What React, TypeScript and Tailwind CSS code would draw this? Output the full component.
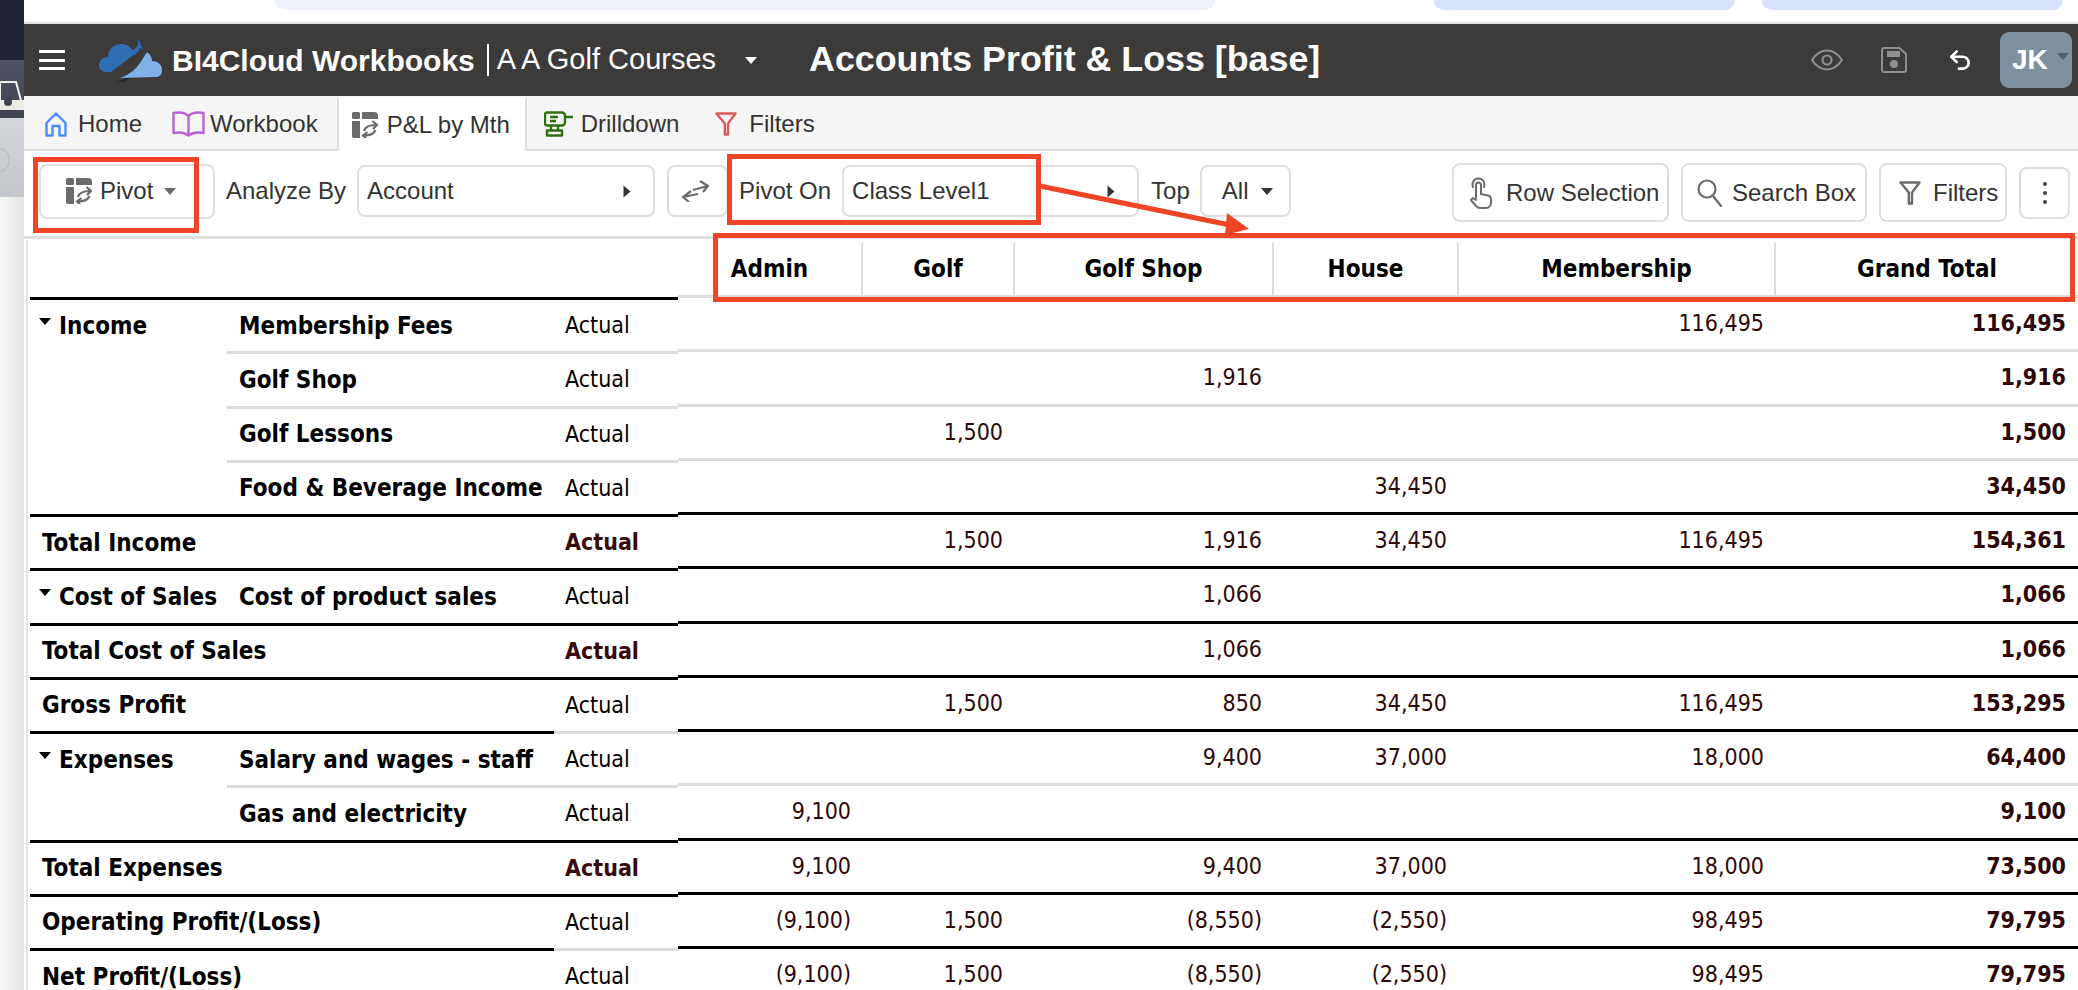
import React from "react";
import { Undo2 } from "lucide-react";

const sans = "font-['Liberation_Sans',Arial,sans-serif]";
const cond = "font-['DejaVu_Sans_Condensed','DejaVu_Sans',sans-serif] [font-stretch:condensed]";

type Row = {
  a: string;
  b?: string;
  caret?: boolean;
  bold?: boolean;
  lines: [string, string, string];
  nums: string[];
  line: string;
};

const K = "border-black";
const G = "border-[#dcdcdc]";
const N = "border-transparent";

const rows: Row[] = [
  { a: "Income", caret: true, b: "Membership Fees", lines: [N, G, G], line: G, nums: ["", "", "", "", "116,495", "116,495"] },
  { a: "", b: "Golf Shop", lines: [N, G, G], line: G, nums: ["", "", "1,916", "", "", "1,916"] },
  { a: "", b: "Golf Lessons", lines: [N, G, G], line: G, nums: ["", "1,500", "", "", "", "1,500"] },
  { a: "", b: "Food & Beverage Income", lines: [K, K, K], line: K, nums: ["", "", "", "34,450", "", "34,450"] },
  { a: "Total Income", bold: true, lines: [K, K, K], line: K, nums: ["", "1,500", "1,916", "34,450", "116,495", "154,361"] },
  { a: "Cost of Sales", caret: true, b: "Cost of product sales", lines: [K, K, K], line: K, nums: ["", "", "1,066", "", "", "1,066"] },
  { a: "Total Cost of Sales", bold: true, lines: [K, K, K], line: K, nums: ["", "", "1,066", "", "", "1,066"] },
  { a: "Gross Profit", lines: [K, K, G], line: K, nums: ["", "1,500", "850", "34,450", "116,495", "153,295"] },
  { a: "Expenses", caret: true, b: "Salary and wages - staff", lines: [N, G, G], line: G, nums: ["", "", "9,400", "37,000", "18,000", "64,400"] },
  { a: "", b: "Gas and electricity", lines: [K, K, K], line: K, nums: ["9,100", "", "", "", "", "9,100"] },
  { a: "Total Expenses", bold: true, lines: [K, K, K], line: K, nums: ["9,100", "", "9,400", "37,000", "18,000", "73,500"] },
  { a: "Operating Profit/(Loss)", lines: [K, K, G], line: K, nums: ["(9,100)", "1,500", "(8,550)", "(2,550)", "98,495", "79,795"] },
  { a: "Net Profit/(Loss)", lines: [K, K, K], line: K, nums: ["(9,100)", "1,500", "(8,550)", "(2,550)", "98,495", "79,795"] },
];

const columns = [
  { name: "Admin", w: "w-[185px]" },
  { name: "Golf", w: "w-[152px]" },
  { name: "Golf Shop", w: "w-[259px]" },
  { name: "House", w: "w-[185px]" },
  { name: "Membership", w: "w-[317px]" },
  { name: "Grand Total", w: "w-[302px]" },
];

const PivotIcon = ({ className }: { className?: string }) => (
  <svg viewBox="0 0 26 26" className={className} fill="#6b6b6b">
    <rect x="0" y="0" width="8" height="7" rx="1.500" />
    <path d="M10 0h12a4 4 0 0 1 4 4v3H10z" />
    <path d="M0 9h8v17H2a2 2 0 0 1-2-2z" />
    <g fill="none" stroke="#6b6b6b" strokeWidth="2.200">
      <path d="M12 19C13 15 17 13 24 13M20.500 9L25 13l-4 4" />
      <path d="M23.500 18C22 22 18 23.500 12 23.500M15.500 20L11 23.500l3 2.500" />
    </g>
  </svg>
);

const FunnelIcon = ({ className, color }: { className?: string; color: string }) => (
  <svg viewBox="0 0 22 24" className={className} fill="none" stroke={color} strokeWidth="2.400">
    <path d="M1.500 1.500h19L13 11.500V22.500h-3.200V11.500z" strokeLinejoin="round" />
  </svg>
);

const Caret = ({ className }: { className?: string }) => (
  <span className={`inline-block h-0 w-0 border-x-[6px] border-t-[7px] border-x-transparent ${className ?? ""}`} />
);

const CloudLogo = () => (
  <svg viewBox="0 0 66 44" className="h-[44px] w-[66px]">
    <path d="M1 27c0-5 4-8 9-8 0-8 6-13 13-13 5 0 9 2 11 6 3-1 6-1 8 0L13 34H8c-4 0-7-3-7-7z" fill="#2f6db4" />
    <path d="M18 44c8-2 17-8 25-20l7-11 1 1-6 13c-5 8-12 14-20 17z" fill="#23262b" />
    <path d="M40 0l5 12-3-2-5 7c-2-1-2-1-3-2l6-8z" fill="#2f6db4" />
    <path d="M22 40c10-3 17-10 22-18l5-8c3 2 5 5 5 9 5 0 10 3 10 9 0 5-3 7-6 7z" fill="#7fb2e6" />
  </svg>
);

function Leftstrip() {
  return (
    <div className="flex w-[24px] shrink-0 flex-col">
      <div className="h-[60px] bg-[#1d2433]" />
      <div className="relative h-[58px] overflow-hidden bg-gradient-to-b from-[#4c5364] to-[#3f4450]">
        <svg viewBox="0 0 24 58" className="h-[58px] w-[24px]">
          <path d="M0 22h16l7 26H0z" fill="none" stroke="#f1f1ec" strokeWidth="2" />
          <path d="M0 40h24v10H0z" fill="#ecebe6" />
          <circle cx="8" cy="42" r="4" fill="#3f4450" />
        </svg>
      </div>
      <div className="relative h-[79px] overflow-hidden bg-gradient-to-b from-[#d3d6da] to-[#c3c6ca]">
        <span className="absolute left-[-16px] top-[29px] h-[26px] w-[26px] rounded-full border border-[#b3b5b8]" />
      </div>
      <div className="flex-1 bg-gradient-to-r from-[#f7f7f7] to-[#e6e6e6]" />
    </div>
  );
}

function Header() {
  return (
    <div className={`flex h-[72px] items-center bg-[#3d3b39] pl-[15px] pr-[6px] text-white ${sans}`}>
      <div className="flex w-[26px] flex-col gap-[5.5px]">
        <span className="h-[3px] bg-white" />
        <span className="h-[3px] bg-white" />
        <span className="h-[3px] bg-white" />
      </div>
      <div className="ml-[33px]">
        <CloudLogo />
      </div>
      <span className="ml-[8px] text-[30px] font-bold">BI4Cloud Workbooks</span>
      <span className="ml-[12px] h-[32px] w-[2px] bg-white" />
      <span className="ml-[8px] text-[29px]">A A Golf Courses</span>
      <Caret className="ml-[29px] border-t-white" />
      <span className="ml-[52px] text-[35.8px] font-bold">Accounts Profit &amp; Loss [base]</span>
      <svg viewBox="0 0 32 22" className="ml-auto h-[22px] w-[32px]" fill="none" stroke="#8f8f8f" strokeWidth="2.200">
        <path d="M1 11c4-6 9-9.500 15-9.500S27 5 31 11c-4 6-9 9.500-15 9.500S5 17 1 11z" />
        <circle cx="16" cy="11" r="4.500" />
      </svg>
      <svg viewBox="0 0 26 26" className="ml-[38px] h-[26px] w-[26px]" fill="none">
        <path d="M2.500 1h16L25 7v16a2 2 0 0 1-2 2H3a2 2 0 0 1-2-2V3a2 2 0 0 1 1.500-2z" stroke="#8f8f8f" strokeWidth="2" />
        <rect x="6" y="4" width="13" height="6" fill="#8f8f8f" />
        <circle cx="13" cy="17" r="4" fill="#8f8f8f" />
      </svg>
      <Undo2 size={26} strokeWidth={2.400} className="ml-[40px] text-white" />
      <div className="ml-[27px] flex h-[56px] w-[72px] items-center rounded-[9px] bg-[#7f919f] pl-[12px]">
        <span className="text-[28px] font-bold">JK</span>
        <Caret className="ml-[9px] mt-[-8px] border-t-[#3d3b39]/60" />
      </div>
    </div>
  );
}

function Tabs() {
  const label = "text-[24px] text-[#333]";
  return (
    <div className={`flex h-[55px] items-stretch border-b-2 border-[#dedede] bg-[#f5f5f5] pl-[21px] ${sans}`}>
      <div className="flex items-center pt-[3px]">
        <svg viewBox="0 0 22 25" className="h-[25px] w-[22px]" fill="none" stroke="#4b8df8" strokeWidth="2.400" strokeLinejoin="round">
          <path d="M1.500 11L11 1.500 20.500 11v12.500h-6V14h-7v9.500h-6z" />
        </svg>
        <span className={`ml-[11px] ${label}`}>Home</span>
      </div>
      <div className="ml-[30px] flex items-center pt-[3px]">
        <svg viewBox="0 0 33 26" className="h-[26px] w-[33px]" fill="none" stroke="#b565d0" strokeWidth="2.400" strokeLinejoin="round">
          <path d="M16.500 5C13 1.500 7 1 1.500 2v20c5.500-1 11-.5 15 2.500 4-3 9.500-3.500 15-2.500V2c-5.500-1-11.500-.5-15 3zM16.500 5v19" />
        </svg>
        <span className={`ml-[5px] ${label}`}>Workbook</span>
      </div>
      <div className="relative z-10 mb-[-2px] ml-[19px] mt-[2px] flex w-[190px] items-center border-x-2 border-[#dedede] bg-white pl-[13px] pt-[1px]">
        <PivotIcon className="h-[26px] w-[26px]" />
        <span className={`ml-[9px] ${label}`}>P&amp;L by Mth</span>
      </div>
      <div className="ml-[17px] flex items-center pt-[3px]">
        <svg viewBox="0 0 30 26" className="h-[26px] w-[30px]" fill="none" stroke="#2f6f10" strokeWidth="2.400" strokeLinejoin="round">
          <path d="M3 1.500h15a3 3 0 0 1 3 3v7a3 3 0 0 1-3 3H3a2 2 0 0 1-2-2v-9a2 2 0 0 1 2-2z" />
          <path d="M21 6h8M6 6h8M6 10h6M7 14.500v5M14 14.500v5M3 24.500h15v-5H3z" />
        </svg>
        <span className={`ml-[7px] ${label}`}>Drilldown</span>
      </div>
      <div className="ml-[36px] flex items-center pt-[3px]">
        <FunnelIcon className="h-[24px] w-[22px]" color="#da5a55" />
        <span className={`ml-[12px] ${label}`}>Filters</span>
      </div>
    </div>
  );
}

const boxed = "flex items-center rounded-[8px] border-2 border-[#dedede] bg-white";

function Toolbar() {
  const txt = "text-[24px] text-[#333]";
  return (
    <div className={`flex h-[88px] items-center border-b-[3px] border-[#dedede] pb-[5px] pl-[15px] pr-[8px] ${sans}`}>
      <div className={`${boxed} h-[55px] w-[176px] pl-[25px]`}>
        <PivotIcon className="h-[26px] w-[26px]" />
        <span className={`ml-[8px] ${txt}`}>Pivot</span>
        <Caret className="ml-[11px] border-t-[#6b6b6b]" />
      </div>
      <span className={`ml-[11px] ${txt}`}>Analyze By</span>
      <div className={`${boxed} ml-[11px] h-[52px] w-[298px] justify-between pl-[8px] pr-[20px]`}>
        <span className={txt}>Account</span>
        <Caret className="rotate-[-90deg] border-t-[#333]" />
      </div>
      <div className={`${boxed} ml-[12px] h-[52px] w-[61px] justify-start pl-[13px]`}>
        <svg viewBox="0 0 27 22" className="h-[22px] w-[27px]" fill="none" stroke="#6b6b6b" strokeWidth="2.200">
          <path d="M11 10L26 6M18 1l8 5-5 6" />
          <path d="M16 14L1 17M9 11l-8 6 6 5" />
        </svg>
      </div>
      <span className={`ml-[11px] ${txt}`}>Pivot On</span>
      <div className={`${boxed} ml-[11px] h-[52px] w-[297px] justify-between pl-[8px] pr-[20px]`}>
        <span className={txt}>Class Level1</span>
        <Caret className="rotate-[-90deg] border-t-[#333]" />
      </div>
      <span className={`ml-[12px] ${txt}`}>Top</span>
      <div className={`${boxed} ml-[10px] h-[52px] w-[91px] pl-[20px]`}>
        <span className={txt}>All</span>
        <Caret className="ml-[13px] border-t-[#333]" />
      </div>
      <div className="ml-auto flex items-center gap-[12px] pt-[3px]">
        <div className={`${boxed} h-[59px] w-[217px] pl-[15px]`}>
          <svg viewBox="0 0 24 32" className="h-[32px] w-[24px]" fill="none" stroke="#6b6b6b" strokeWidth="2" strokeLinecap="round" strokeLinejoin="round">
            <path d="M4 10a6 6 0 1 1 11 0" />
            <path d="M7 21V8a2.500 2.500 0 0 1 5 0v9l7 1.500c2 .5 3 2 3 4v3c0 3-2 5.500-5 5.500h-6c-2 0-3-1-4-2l-5-6 2-2 3 2" />
          </svg>
          <span className={`ml-[13px] ${txt}`}>Row Selection</span>
        </div>
        <div className={`${boxed} h-[59px] w-[186px] pl-[14px]`}>
          <svg viewBox="0 0 26 30" className="h-[30px] w-[26px]" fill="none" stroke="#6b6b6b" strokeWidth="2.200" strokeLinecap="round">
            <circle cx="10" cy="11" r="8.500" />
            <path d="M16 18l8 10" />
          </svg>
          <span className={`ml-[9px] ${txt}`}>Search Box</span>
        </div>
        <div className={`${boxed} h-[59px] w-[128px] pl-[18px]`}>
          <FunnelIcon className="h-[24px] w-[22px]" color="#6b6b6b" />
          <span className={`ml-[12px] ${txt}`}>Filters</span>
        </div>
        <div className={`${boxed} h-[52px] w-[51px] justify-center`}>
          <span className="flex flex-col gap-[5px]">
            <span className="h-[4px] w-[4px] rounded-full bg-[#444]" />
            <span className="h-[4px] w-[4px] rounded-full bg-[#444]" />
            <span className="h-[4px] w-[4px] rounded-full bg-[#444]" />
          </span>
        </div>
      </div>
    </div>
  );
}

function LeftTable() {
  return (
    <div className="w-[648px] shrink-0 text-black">
      <div className="h-[60px] border-b-[3px] border-black" />
      {rows.map((r, i) => (
        <div key={i} className="flex h-[54.25px]">
          {r.b ? (
            <>
              <div className={`flex h-full w-[197px] items-center border-b-[3px] pl-[9px] text-[24px] font-bold ${r.lines[0]}`}>
                {r.caret && <Caret className="mr-[8px] mt-[-8px] border-t-black" />}
                {r.a}
              </div>
              <div className={`flex h-full w-[327px] items-center border-b-[3px] pl-[12px] text-[24px] font-bold ${r.lines[1]}`}>{r.b}</div>
            </>
          ) : (
            <div className={`flex h-full w-[524px] items-center border-b-[3px] pl-[12px] text-[24px] font-bold ${r.lines[0]}`}>{r.a}</div>
          )}
          <div className={`flex h-full w-[124px] items-center border-b-[3px] pl-[11px] ${r.lines[2]} ${r.bold ? "font-bold text-[#3a0a0a]" : ""}`}>Actual</div>
        </div>
      ))}
    </div>
  );
}

function RightTable() {
  return (
    <div className="w-[1400px] shrink-0 text-[#2e0707]">
      <div className="flex h-[58px] border-b-[3px] border-[#dcdcdc] pt-[3px] text-[24px] text-black">
        {columns.map((c, i) => (
          <div key={c.name} className={`flex items-center justify-center font-bold ${c.w} ${i < 5 ? "border-r-2 border-[#dcdcdc]" : ""}`}>
            {c.name}
          </div>
        ))}
      </div>
      {rows.map((r, i) => (
        <div key={i} className={`flex h-[54.25px] border-b-[3px] ${r.line}`}>
          {r.nums.map((n, j) => (
            <div key={j} className={`flex items-center justify-end pr-[12px] ${columns[j].w} ${j === 5 ? "font-bold" : ""}`}>
              {n}
            </div>
          ))}
        </div>
      ))}
    </div>
  );
}

export default function App() {
  return (
    <div className="relative flex h-[990px] w-[2078px] overflow-hidden bg-white">
      <Leftstrip />
      <div className="flex min-w-0 flex-1 flex-col">
        <div className="flex h-[24px] border-b-2 border-[#dedede]">
          <div className="ml-[251px] h-[10px] w-[940px] rounded-b-[14px] bg-[#eef2fa]" />
          <div className="ml-[219px] h-[10px] w-[301px] rounded-b-[14px] bg-[#d5e2fa]" />
          <div className="ml-[27px] h-[10px] w-[301px] rounded-b-[14px] bg-[#d5e2fa]" />
        </div>
        <Header />
        <Tabs />
        <Toolbar />
        <div className={`ml-[2px] mt-[1px] flex flex-1 overflow-hidden border-l-2 border-[#e2e2e2] pl-[2px] text-[23px] leading-none ${cond}`}>
          <LeftTable />
          <RightTable />
        </div>
      </div>

      {/* red call-outs drawn over the screenshot */}
      <div className="absolute left-[33px] top-[157px] h-[76px] w-[166px] border-[5px] border-[#ef4425]" />
      <div className="absolute left-[727px] top-[154px] h-[71px] w-[314px] border-[5px] border-[#ef4425]" />
      <div className="absolute left-[713px] top-[233px] h-[69px] w-[1362px] border-[5px] border-[#ef4425]" />
      <svg className="absolute left-[1035px] top-[180px] h-[60px] w-[220px]" viewBox="0 0 220 60">
        <path d="M5 6L195 45" stroke="#ef4425" strokeWidth="5" />
        <path d="M192 33L214 49 190 55z" fill="#ef4425" />
      </svg>
    </div>
  );
}
